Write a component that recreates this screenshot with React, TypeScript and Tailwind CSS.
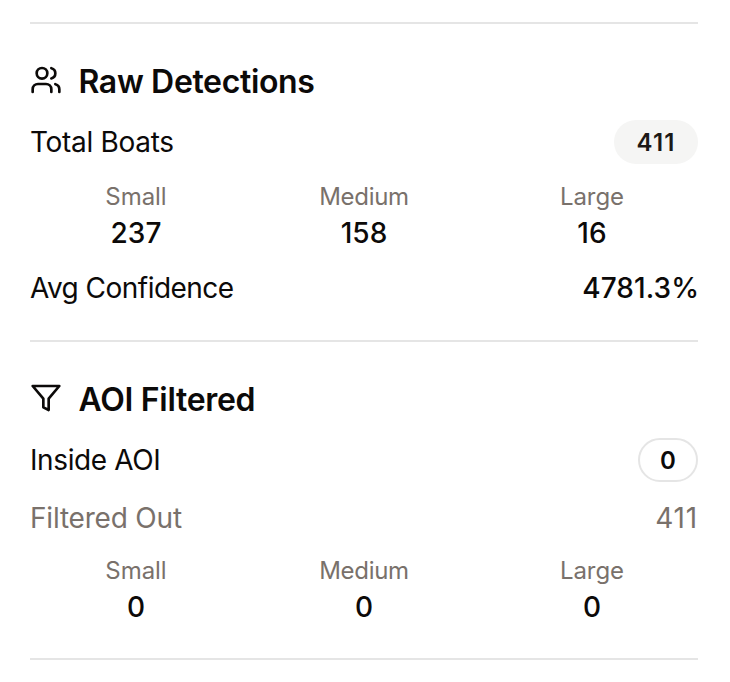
import { Users } from "lucide-react";

type Size = { label: string; value: string };

function FilterIcon() {
  return (
    <svg
      className="size-8 shrink-0"
      viewBox="0 0 24 24"
      fill="none"
      stroke="currentColor"
      strokeWidth="2"
      strokeLinecap="round"
      strokeLinejoin="round"
    >
      <polygon points="22 3 2 3 10 12.46 10 19 14 21 14 12.46 22 3" />
    </svg>
  );
}

function Sizes({ values }: { values: Size[] }) {
  return (
    <div className="mt-4 grid grid-cols-3 gap-4 text-center">
      {values.map(({ label, value }) => (
        <div key={label}>
          <div
            className={`text-2xl/[34px] text-[#79716b] ${label === "Medium" ? "tracking-[-0.3px]" : "tracking-[-0.05px]"}`}
          >
            {label}
          </div>
          <div className="text-[28px]/[38px] font-medium">{value}</div>
        </div>
      ))}
    </div>
  );
}

export default function App() {
  return (
    <div className="h-[682px] w-[730px] bg-white pt-[22px] pr-8 pl-[30px] font-['Inter',sans-serif] text-[28px]/[40px] text-[#0c0a09]">
      <section className="h-[318px] border-t-2 border-[#e5e5e5] pt-9">
        <div className="flex h-10 items-center gap-[16.5px]">
          <Users className="size-8 shrink-0" strokeWidth={2} />
          <h2 className="pt-1 text-[32px]/[40px] font-semibold tracking-[-0.35px]">Raw Detections</h2>
        </div>
        <div className="mt-5 flex h-11 items-center justify-between">
          <span className="tracking-[-0.3px]">Total Boats</span>
          <span className="flex h-11 w-[84px] items-center justify-center rounded-full bg-[#f5f5f4] pt-0.5 text-2xl font-semibold tracking-[1.1px] text-[#1c1917]">
            411
          </span>
        </div>
        <Sizes
          values={[
            { label: "Small", value: "237" },
            { label: "Medium", value: "158" },
            { label: "Large", value: "16" },
          ]}
        />
        <div className="mt-4 flex h-10 items-center justify-between">
          <span className="tracking-[-0.52px]">Avg Confidence</span>
          <span className="-mr-px font-medium tracking-[0.05px]">4781.3%</span>
        </div>
      </section>
      <section className="h-[320px] border-y-2 border-[#e5e5e5] pt-9">
        <div className="flex h-10 items-center gap-[16.5px]">
          <FilterIcon />
          <h2 className="pt-1 text-[32px]/[40px] font-semibold tracking-[-0.3px]">AOI Filtered</h2>
        </div>
        <div className="mt-5 flex h-11 items-center justify-between">
          <span className="tracking-[-0.4px]">Inside AOI</span>
          <span className="flex h-11 w-[60px] items-center justify-center rounded-full border-2 border-[#e5e5e5] pt-0.5 text-2xl font-semibold">
            0
          </span>
        </div>
        <div className="mt-4 flex h-10 items-center justify-between text-[#79716b]">
          <span className="tracking-[-0.2px]">Filtered Out</span>
          <span className="tracking-[0.8px]">411</span>
        </div>
        <Sizes
          values={[
            { label: "Small", value: "0" },
            { label: "Medium", value: "0" },
            { label: "Large", value: "0" },
          ]}
        />
      </section>
    </div>
  );
}
